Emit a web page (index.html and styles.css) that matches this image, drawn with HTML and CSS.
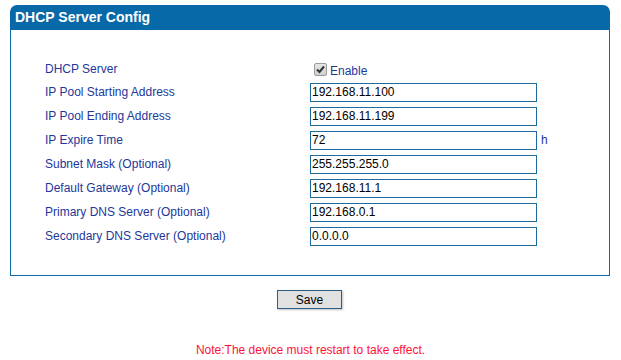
FILE: index.html
```html
<!DOCTYPE html>
<html lang="en">

<head>
    <meta charset="UTF-8" />
    <link rel="stylesheet" href="styles.css">
    <title>DHCP Server Config</title>
</head>

<body>
    <div class="panel">
        <div class="panel-head">DHCP Server Config</div>
        <div class="panel-body">
            <div class="row">
                <label>DHCP Server</label>
                <div class="field">
                    <span class="check">
                        <svg width="9" height="9" viewBox="0 0 9 9">
                            <path d="M1 4.5 L3.5 7 L8 1.5" fill="none" stroke="#333" stroke-width="2" />
                        </svg>
                    </span>
                    <span class="enable">Enable</span>
                </div>
            </div>
            <div class="row">
                <label>IP Pool Starting Address</label>
                <div class="field"><input type="text" value="192.168.11.100" /></div>
            </div>
            <div class="row">
                <label>IP Pool Ending Address</label>
                <div class="field"><input type="text" value="192.168.11.199" /></div>
            </div>
            <div class="row">
                <label>IP Expire Time</label>
                <div class="field"><input type="text" value="72" /><span class="unit">h</span></div>
            </div>
            <div class="row">
                <label>Subnet Mask (Optional)</label>
                <div class="field"><input type="text" value="255.255.255.0" /></div>
            </div>
            <div class="row">
                <label>Default Gateway (Optional)</label>
                <div class="field"><input type="text" value="192.168.11.1" /></div>
            </div>
            <div class="row">
                <label>Primary DNS Server (Optional)</label>
                <div class="field"><input type="text" value="192.168.0.1" /></div>
            </div>
            <div class="row">
                <label>Secondary DNS Server (Optional)</label>
                <div class="field"><input type="text" value="0.0.0.0" /></div>
            </div>
        </div>
    </div>

    <div class="actions"><button type="button">Save</button></div>

    <p class="note">Note:The device must restart to take effect.</p>
</body>

</html>
```

FILE: styles.css
```css
* {
    margin: 0;
    padding: 0;
    box-sizing: border-box;
    font-family: 'Liberation Sans', Arial, sans-serif;
}

body {
    width: 621px;
    background: #fff;
    font-size: 12px;
}

.panel {
    width: 600px;
    margin: 5px 0 0 10px;
}

.panel-head {
    height: 25px;
    padding: 4px 0 0 5px;
    background: #0769a7;
    color: #fff;
    font-family: 'Liberation Sans Narrow', 'Liberation Sans', sans-serif;
    font-stretch: condensed;
    font-weight: 700;
    font-size: 14px;
    line-height: 17px;
    border-radius: 7px 7px 0 0;
}

.panel-body {
    border: 1px solid #0a6ba8;
    border-top: none;
    padding: 28px 0 27px 34px;
}

.row {
    display: grid;
    grid-template-columns: 265px auto;
    align-items: center;
    height: 24px;
}

.row:first-child {
    height: 22px;
}

.row label {
    color: #23379a;
}

.field {
    display: flex;
    align-items: center;
}

.field input {
    width: 227px;
    height: 19px;
    border: 1px solid #1c6a9e;
    padding: 0 1px;
    font-size: 12px;
    color: #000;
    outline: none;
}

.check {
    display: flex;
    align-items: center;
    justify-content: center;
    width: 13px;
    height: 13px;
    margin: 1px 3px 0 4px;
    border: 1px solid #9c9c9c;
    border-radius: 2px;
    background: linear-gradient(#e6e6e6, #cfcfcf);
}

.enable {
    color: #23379a;
    margin-top: 3px;
}

.unit {
    margin-left: 4px;
    color: #23379a;
}

.actions {
    margin-top: 14px;
    padding-left: 277px;
}

button {
    width: 65px;
    height: 19px;
    background: #e1e1e1;
    border: 1px solid #2c5d86;
    font-size: 12px;
    color: #000;
    box-shadow: 1px 1px 2px rgba(0, 0, 0, 0.25);
}

.note {
    margin-top: 34px;
    width: 621px;
    text-align: center;
    color: #ff1038;
}
```
